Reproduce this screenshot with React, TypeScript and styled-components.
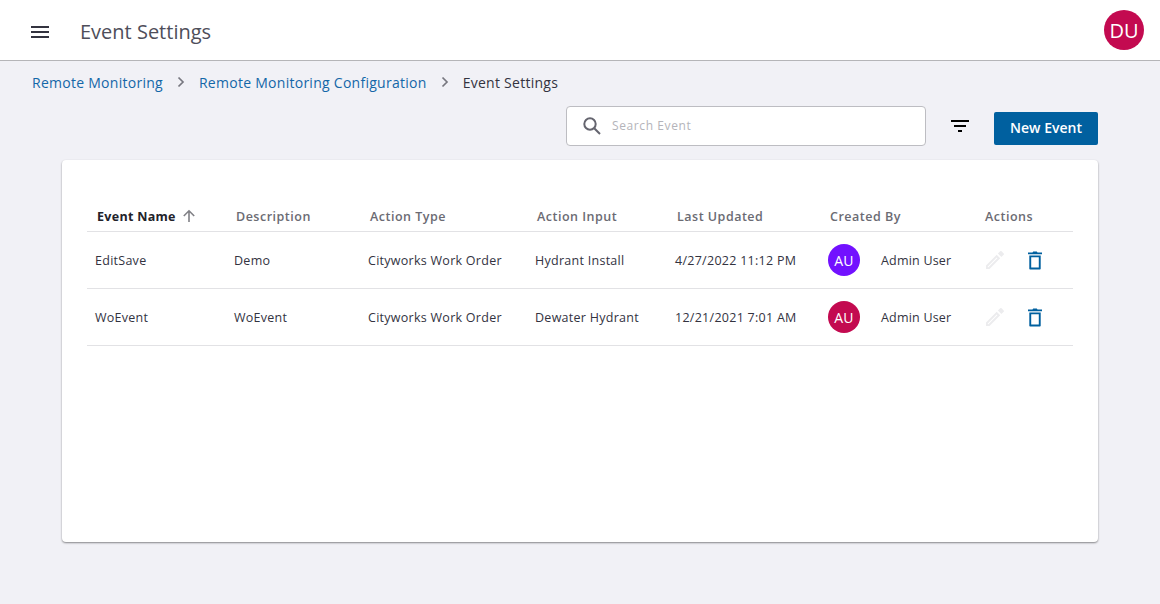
import React from "react";
import styled, { createGlobalStyle } from "styled-components";

const Global = createGlobalStyle`
  html, body { margin: 0; padding: 0; background: #f1f1f6; }
  body { font-family: "Open Sans", "Liberation Sans", sans-serif; }
  * { box-sizing: border-box; }
`;

const Page = styled.div`
  width: 1160px;
  height: 604px;
  overflow: hidden;
  background: #f1f1f6;
`;

const Header = styled.header`
  height: 61px;
  background: #fff;
  border-bottom: 1px solid #b5b5b8;
  display: flex;
  align-items: center;
  padding: 2px 16px 0 30px;
`;

const MenuButton = styled.div`
  width: 20px;
  height: 14px;
  margin-right: 30px;
  display: flex;
  align-items: center;
  color: #33333f;
`;

const Title = styled.h1`
  margin: 0;
  flex: 1;
  font-size: 20px;
  line-height: 28px;
  font-weight: 400;
  color: #4e4e5a;
  padding-top: 2px;
`;

const Avatar = styled.div<{ $bg: string; $size: number; $font: number }>`
  width: ${(p) => p.$size}px;
  height: ${(p) => p.$size}px;
  border-radius: 50%;
  background: ${(p) => p.$bg};
  color: #fff;
  font-size: ${(p) => p.$font}px;
  display: flex;
  align-items: center;
  justify-content: center;
  flex: none;
`;

const HeaderAvatar = styled(Avatar)`
  margin-top: -2px;
`;

const Crumbs = styled.nav`
  display: flex;
  align-items: center;
  height: 44px;
  padding: 0 0 2px 32px;
  font-size: 14px;
  letter-spacing: 0.27px;
`;

const CrumbLink = styled.span`
  color: #1467a8;
`;

const CrumbCurrent = styled.span`
  color: #33333f;
`;

const CrumbSep = styled.span`
  width: 36px;
  display: flex;
  justify-content: center;
  color: #77777f;
`;

const Toolbar = styled.div`
  display: flex;
  align-items: center;
  height: 40px;
  margin-top: 1px;
  padding-left: 566px;
`;

const Search = styled.div`
  width: 360px;
  height: 40px;
  background: #fff;
  border: 1px solid #bdbdc2;
  border-radius: 4px;
  display: flex;
  align-items: center;
  padding-left: 15px;
  gap: 10px;
  color: #65656f;
`;

const Placeholder = styled.span`
  font-size: 12px;
  line-height: 16px;
  color: #b4b4ba;
  letter-spacing: 0.6px;
`;

const FilterButton = styled.div`
  width: 20px;
  height: 20px;
  margin-left: 24px;
  display: flex;
  align-items: center;
  justify-content: center;
  color: #000;
`;

const NewButton = styled.button`
  width: 104px;
  height: 33px;
  margin-left: 24px;
  margin-top: 5px;
  padding: 0 0 2px;
  border: 0;
  border-radius: 2px;
  background: #00609f;
  color: #fff;
  font-family: inherit;
  font-size: 14px;
  font-weight: 600;
`;

const Card = styled.section`
  width: 1036px;
  height: 382px;
  margin: 14px 0 0 62px;
  padding: 39px 25px 0;
  background: #fff;
  border-radius: 4px;
  box-shadow: 0 1px 2px rgba(0, 0, 0, 0.45);
`;

const Row = styled.div<{ $height: number }>`
  display: grid;
  grid-template-columns: 139px 134px 167px 140px 153px 155px 98px;
  align-items: center;
  height: ${(p) => p.$height}px;
  border-bottom: 1px solid #e2e2e5;
`;

const HeadCell = styled.div<{ $active?: boolean }>`
  display: flex;
  align-items: center;
  padding: 2px 0 0 10px;
  font-size: 12.5px;
  font-weight: ${(p) => (p.$active ? 700 : 600)};
  letter-spacing: ${(p) => (p.$active ? 0.3 : 0.5)}px;
  color: ${(p) => (p.$active ? "#22222a" : "#6b6b73")};
  white-space: nowrap;
`;

const SortIcon = styled.span`
  display: flex;
  margin-left: 6px;
  color: #808086;
`;

const Cell = styled.div`
  padding-left: 8px;
  font-size: 12.5px;
  color: #33333f;
  white-space: nowrap;
  letter-spacing: 0.27px;
`;

const UserCell = styled(Cell)`
  display: flex;
  align-items: center;
  gap: 21px;
  letter-spacing: 0.2px;
`;

const ActionCell = styled.div`
  display: flex;
  align-items: center;
  padding-left: 10px;
  gap: 20px;
`;

const rows = [
  { name: "EditSave", desc: "Demo", type: "Cityworks Work Order", input: "Hydrant Install", date: "4/27/2022 11:12 PM", color: "#7211ff" },
  { name: "WoEvent", desc: "WoEvent", type: "Cityworks Work Order", input: "Dewater Hydrant", date: "12/21/2021 7:01 AM", color: "#c30a50" },
];

const MenuIcon = () => (
  <svg width="20" height="14" viewBox="0 0 20 14" fill="currentColor">
    <rect x="1" y="2" width="18" height="2" />
    <rect x="1" y="7" width="18" height="2" />
    <rect x="1" y="12" width="18" height="2" />
  </svg>
);

const Chevron = () => (
  <svg width="8" height="12" viewBox="0 0 8 12" fill="none" stroke="currentColor" strokeWidth="1.7">
    <path d="M1.500 1.500 6 6l-4.500 4.500" />
  </svg>
);

const SearchIcon = () => (
  <svg width="20" height="20" viewBox="0 0 20 20" fill="none" stroke="currentColor" strokeWidth="2">
    <circle cx="8" cy="8" r="5.700" />
    <path d="M12.200 12.200 18 18" />
  </svg>
);

const FilterIcon = () => (
  <svg width="18" height="12" viewBox="0 0 18 12" fill="currentColor">
    <rect width="18" height="2" />
    <rect x="3" y="5" width="12" height="2" />
    <rect x="7" y="10" width="4" height="2" />
  </svg>
);

const ArrowUp = () => (
  <svg width="14" height="14" viewBox="0 0 14 14" fill="none" stroke="currentColor" strokeWidth="1.600">
    <path d="M7 13V1.800M1.800 7 7 1.800 12.200 7" />
  </svg>
);

const PencilIcon = () => (
  <svg width="20" height="20" viewBox="0 0 20 20" fill="#ececee">
    <path d="M1 15.500V19h3.500L15.200 8.300l-3.500-3.500L1 15.500zM3.400 17.200H2.800v-.7l8.900-8.900.7.700-8.999 8.900z" />
    <path d="M12.900 3.600l3.500 3.500 2.300-2.300a1 1 0 0 0 0-1.400L16.600 1.300a1 1 0 0 0-1.400 0z" />
  </svg>
);

const TrashIcon = () => (
  <svg width="20" height="20" viewBox="0 0 20 20" fill="#00609f">
    <path d="M3 2.500h4.500L8.200 1.500h3.600l.7 1h4.500v1.800H3z" />
    <path fillRule="evenodd" d="M4.300 5.500h11.400v13.200a.8.800 0 0 1-.8.800H5.100a.8.800 0 0 1-.8-.8zm1.900 1.800v10.300h7.600V7.300z" />
  </svg>
);

export default function App() {
  return (
    <Page>
      <Global />
      <Header>
        <MenuButton><MenuIcon /></MenuButton>
        <Title>Event Settings</Title>
        <HeaderAvatar $bg="#c30a50" $size={40} $font={20}>DU</HeaderAvatar>
      </Header>
      <Crumbs>
        <CrumbLink>Remote Monitoring</CrumbLink>
        <CrumbSep><Chevron /></CrumbSep>
        <CrumbLink>Remote Monitoring Configuration</CrumbLink>
        <CrumbSep><Chevron /></CrumbSep>
        <CrumbCurrent>Event Settings</CrumbCurrent>
      </Crumbs>
      <Toolbar>
        <Search>
          <SearchIcon />
          <Placeholder>Search Event</Placeholder>
        </Search>
        <FilterButton><FilterIcon /></FilterButton>
        <NewButton>New Event</NewButton>
      </Toolbar>
      <Card>
        <Row $height={33}>
          <HeadCell $active>Event Name<SortIcon><ArrowUp /></SortIcon></HeadCell>
          <HeadCell>Description</HeadCell>
          <HeadCell>Action Type</HeadCell>
          <HeadCell>Action Input</HeadCell>
          <HeadCell>Last Updated</HeadCell>
          <HeadCell>Created By</HeadCell>
          <HeadCell>Actions</HeadCell>
        </Row>
        {rows.map((r) => (
          <Row $height={57} key={r.name}>
            <Cell>{r.name}</Cell>
            <Cell>{r.desc}</Cell>
            <Cell>{r.type}</Cell>
            <Cell>{r.input}</Cell>
            <Cell>{r.date}</Cell>
            <UserCell>
              <Avatar $bg={r.color} $size={32} $font={14}>AU</Avatar>
              Admin User
            </UserCell>
            <ActionCell>
              <PencilIcon />
              <TrashIcon />
            </ActionCell>
          </Row>
        ))}
      </Card>
    </Page>
  );
}
